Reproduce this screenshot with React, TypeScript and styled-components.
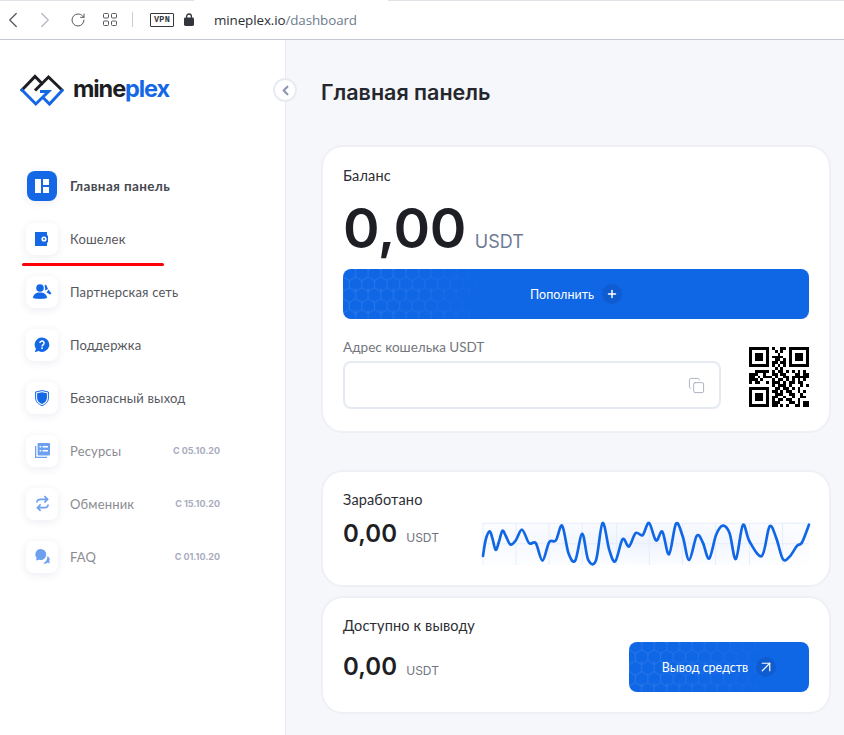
import React from "react";
import styled, { createGlobalStyle } from "styled-components";
import { Copy, Plus, ArrowUpRight, ChevronLeft, ChevronRight, RotateCw } from "lucide-react";

const Global = createGlobalStyle`
  html, body { margin: 0; padding: 0; height: 100%; overflow: hidden; background: #fff; }
  body { font-family: "Lato", "Noto Sans", sans-serif; }
  * { box-sizing: border-box; }
`;

const Page = styled.div`
  width: 844px;
  height: 735px;
  display: flex;
  flex-direction: column;
  overflow: hidden;
`;

const Bar = styled.header`
  height: 40px;
  flex: none;
  display: flex;
  align-items: center;
  padding: 0 0 0 4px;
  background: linear-gradient(#dfe2e7, #dfe2e7) 0 0 / 194px 1px no-repeat,
    linear-gradient(#dfe2e7, #dfe2e7) 388px 0 / 456px 1px no-repeat, #fff;
  border-bottom: 1px solid #c3c8d2;
`;

const NavArrow = styled.span<{ $dim?: boolean }>`
  display: flex;
  justify-content: center;
  width: 18px;
  margin-right: ${(p) => (p.$dim ? 16 : 14)}px;
  color: ${(p) => (p.$dim ? "#b5b9c0" : "#55595f")};
  & > svg {
    flex: none;
  }
`;

const BarIcon = styled.span<{ $gap: number }>`
  display: flex;
  color: #55595f;
  margin-right: ${(p) => p.$gap}px;
`;

const Separator = styled.span`
  width: 1px;
  height: 15px;
  background: #c9ccd2;
  margin-right: 17px;
`;

const VpnBadge = styled.span`
  width: 24px;
  height: 14px;
  border: 1px solid #33373d;
  border-radius: 1px;
  font: 700 8.5px/12px "Liberation Mono", monospace;
  letter-spacing: 0.2px;
  color: #33373d;
  text-align: center;
  margin-right: 10px;
`;

const Url = styled.span`
  font: 400 13.4px "Open Sans", sans-serif;
  letter-spacing: -0.1px;
  margin-left: 20px;
  color: #2c3036;
`;

const UrlPath = styled.span`
  color: #6d7c8c;
`;

const Body = styled.div`
  flex: 1;
  display: flex;
  min-height: 0;
`;

const Sidebar = styled.aside`
  position: relative;
  width: 286px;
  flex: none;
  background: #fff;
  border-right: 1px solid #e9ebf3;
  display: flex;
  flex-direction: column;
`;

const LogoRow = styled.div`
  height: 119px;
  padding: 33px 0 0 19px;
  display: flex;
  align-items: flex-start;
  gap: 8px;
`;

const LogoText = styled.span`
  font: 700 23.5px/32px "Inter", sans-serif;
  letter-spacing: -1.1px;
  color: #1d1e24;
`;

const LogoAccent = styled.span`
  color: #1468e6;
`;

const Toggle = styled.button`
  position: absolute;
  top: 38px;
  right: -12px;
  width: 24px;
  height: 24px;
  border-radius: 50%;
  border: 2px solid #e9ebf3;
  background: #fff;
  padding: 0;
  display: flex;
  align-items: center;
  justify-content: center;
  color: #8d95b3;
`;

const NavList = styled.nav`
  display: flex;
  flex-direction: column;
  padding: 0 0 0 26px;
`;

const NavItem = styled.div`
  position: relative;
  height: 53px;
  display: flex;
  align-items: center;
  padding-right: 65px;
`;

const IconTile = styled.span<{ $active?: boolean; $muted?: boolean }>`
  width: ${(p) => (p.$active ? 30 : 32)}px;
  height: ${(p) => (p.$active ? 30 : 32)}px;
  margin: 0 ${(p) => (p.$active ? 1 : 0)}px;
  flex: none;
  display: flex;
  align-items: center;
  justify-content: center;
  border-radius: 8px;
  background: ${(p) => (p.$active ? "#1468e6" : "#fff")};
  color: #1468e6;
  box-shadow: 0 2px 8px rgba(40, 60, 120, 0.09);
  & > svg {
    opacity: ${(p) => (p.$muted ? 0.62 : 1)};
  }
`;

const NavLabel = styled.span<{ $active?: boolean; $muted?: boolean }>`
  margin-left: 12px;
  flex: 1;
  font-size: ${(p) => (p.$active ? 13.5 : 13)}px;
  font-weight: ${(p) => (p.$active ? 700 : 400)};
  color: ${(p) => (p.$active ? "#46484f" : p.$muted ? "#8a8c92" : "#56585e")};
  letter-spacing: ${(p) => (p.$active ? 0.35 : 0.17)}px;
`;

const SoonDate = styled.span`
  font: 700 9px "Inter", sans-serif;
  color: #a8acbe;
`;

const RedMark = styled.span`
  position: absolute;
  left: -4px;
  top: 51px;
  width: 142px;
  height: 3px;
  border-radius: 2px;
  background: #ff0008;
`;

const Main = styled.main`
  flex: 1;
  background: #f6f7fb;
  padding: 0 13px 0 35px;
  display: flex;
  flex-direction: column;
`;

const Title = styled.h1`
  height: 105px;
  margin: 0;
  padding-bottom: 2px;
  display: flex;
  align-items: center;
  font: 600 21.5px "Inter", sans-serif;
  color: #25272d;
`;

const Card = styled.section<{ $h: number; $mt?: number }>`
  height: ${(p) => p.$h}px;
  margin-top: ${(p) => p.$mt ?? 0}px;
  background: #fff;
  border: 2px solid #eff0f6;
  border-radius: 22px;
  padding: 0 20px;
  display: flex;
  flex-direction: column;
`;

const CardLabel = styled.div<{ $pt: number }>`
  padding-top: ${(p) => p.$pt}px;
  font-size: 14.5px;
  line-height: 18px;
  letter-spacing: 0.15px;
  color: #2c2e34;
`;

const BigAmount = styled.div`
  display: flex;
  align-items: baseline;
  gap: 9px;
  height: 56px;
  margin-top: 15px;
  line-height: 56px;
`;

const BigNumber = styled.span`
  font: 600 55.5px/56px "Inter", sans-serif;
  letter-spacing: -0.4px;
  color: #1e1f25;
`;

const BigUnit = styled.span`
  font: 400 18px "Inter", sans-serif;
  color: #6f7b93;
`;

const PrimaryButton = styled.button<{ $w?: number }>`
  position: relative;
  overflow: hidden;
  width: ${(p) => (p.$w ? `${p.$w}px` : "100%")};
  height: 50px;
  flex: none;
  border: 0;
  border-radius: 8px;
  background: #1067e6;
  color: #fff;
  font-family: "Lato", "Noto Sans", sans-serif;
  font-size: 12.5px;
  display: flex;
  align-items: center;
  justify-content: center;
  gap: 8px;
  padding: 0;
`;

const TopUp = styled(PrimaryButton)`
  margin-top: 13px;
`;

const ButtonText = styled.span`
  position: relative;
`;

const ButtonBadge = styled.span`
  position: relative;
  width: 20px;
  height: 20px;
  border-radius: 50%;
  background: #0f5cd0;
  display: flex;
  align-items: center;
  justify-content: center;
`;

const Hex = styled.svg`
  position: absolute;
  left: 0;
  top: 0;
  width: 150px;
  height: 100%;
`;

const AddressRow = styled.div`
  display: flex;
  justify-content: space-between;
  align-items: flex-end;
  margin-top: 18px;
`;

const AddressField = styled.div`
  width: 378px;
`;

const AddressLabel = styled.div`
  font-size: 13.5px;
  line-height: 20px;
  color: #73767d;
`;

const AddressBox = styled.div`
  height: 48px;
  margin-top: 4px;
  border: 2px solid #e6eaf3;
  border-radius: 8px;
  display: flex;
  align-items: center;
  justify-content: flex-end;
  padding-right: 14px;
  color: #a6acbc;
`;

const QrCode = styled.svg`
  width: 60px;
  height: 60px;
  flex: none;
  margin-bottom: 2px;
  display: block;
`;

const StatRow = styled.div<{ $mt: number; $align: string }>`
  display: flex;
  justify-content: space-between;
  align-items: ${(p) => p.$align};
  margin-top: ${(p) => p.$mt}px;
`;

const Amount = styled.div`
  display: flex;
  align-items: baseline;
  gap: 9px;
`;

const SmallNumber = styled.span`
  font: 600 24px/30px "Inter", sans-serif;
  letter-spacing: 0.1px;
  color: #1e1f25;
`;

const SmallUnit = styled.span`
  font: 400 12px "Inter", sans-serif;
  color: #6f7480;
`;

const Chart = styled.svg`
  width: 326px;
  height: 42px;
  margin-top: 4px;
  display: block;
  overflow: visible;
`;

const qrRows = [
  "111111101001101111111",
  "100000100101001000001",
  "101110100010001011101",
  "101110101111001011101",
  "101110100110101011101",
  "100000101101101000001",
  "111111101010101111111",
  "000000000101000000000",
  "001111101011010101010",
  "111001001101100011011",
  "110101110100110111111",
  "111010001011010101010",
  "101100101110101101100",
  "000000001011101000101",
  "111111100110110101000",
  "100000101101011001010",
  "101110100111001100100",
  "101110101100100100110",
  "101110101011011001000",
  "100000101110001101011",
  "111111101101010011011",
];

const wave: [number, number][] = [
  [40, 138], [48, 90], [60, 65], [68, 85], [78, 120], [88, 95], [98, 63], [108, 78], [122, 104], [138, 92],
  [157, 60], [178, 100], [198, 100], [218, 152], [238, 97], [258, 92], [277, 48], [296, 130], [316, 152],
  [337, 72], [355, 150], [378, 152], [398, 40], [418, 120], [436, 154], [458, 88], [477, 110], [497, 70],
  [518, 76], [537, 40], [558, 92], [577, 66], [597, 133], [618, 42], [638, 80], [657, 150], [680, 78],
  [698, 98], [717, 146], [738, 75], [758, 48], [778, 70], [797, 147], [818, 46], [838, 95], [875, 138],
  [898, 50], [918, 85], [938, 148], [958, 140], [980, 108], [995, 98], [1016, 45],
];

function smooth(pts: [number, number][]) {
  let d = `M${pts[0][0]} ${pts[0][1]}`;
  for (let i = 0; i < pts.length - 1; i++) {
    const p0 = pts[Math.max(i - 1, 0)];
    const p1 = pts[i];
    const p2 = pts[i + 1];
    const p3 = pts[Math.min(i + 2, pts.length - 1)];
    const c1 = [p1[0] + (p2[0] - p0[0]) / 6, p1[1] + (p2[1] - p0[1]) / 6];
    const c2 = [p2[0] - (p3[0] - p1[0]) / 6, p2[1] - (p3[1] - p1[1]) / 6];
    d += `C${c1[0]} ${c1[1]} ${c2[0]} ${c2[1]} ${p2[0]} ${p2[1]}`;
  }
  return d;
}

const HexOverlay = ({ id }: { id: string }) => (
  <Hex aria-hidden="true">
    <defs>
      <pattern id={id} width="12.6" height="21.8" patternUnits="userSpaceOnUse" y="-3">
        <path
          d="M6.3 0L12.6 3.6V10.9L6.3 14.5L0 10.9V3.6ZM6.3 14.5V21.8M0 3.6V0M12.6 3.6V0"
          fill="none"
          stroke="#fff"
          strokeOpacity="0.15"
          strokeWidth="0.8"
        />
      </pattern>
      <linearGradient id={`${id}-f`}>
        <stop offset="0" stopColor="#fff" />
        <stop offset="0.5" stopColor="#fff" stopOpacity="0.6" />
        <stop offset="1" stopColor="#fff" stopOpacity="0" />
      </linearGradient>
      <mask id={`${id}-m`}>
        <rect width="150" height="50" fill={`url(#${id}-f)`} />
      </mask>
    </defs>
    <rect width="150" height="50" fill={`url(#${id})`} mask={`url(#${id}-m)`} />
  </Hex>
);

const Logo = () => (
  <svg width="46" height="34" viewBox="0 0 46 34" fill="none" strokeWidth="3" strokeLinejoin="miter">
    <path d="M2 18L16 3.5L23 10.5L29.5 4L44 18" stroke="#1d1e24" />
    <path d="M16 17.5L23.5 10" stroke="#1d1e24" />
    <path d="M2 16L16.8 31L29.5 18.5H21M24 24.5L30.5 31L44 16.5" stroke="#1468e6" />
  </svg>
);

const DashIcon = () => (
  <svg width="16" height="16" viewBox="0 0 16 16" fill="#fff">
    <rect x="1" y="1" width="6" height="14" />
    <rect x="9" y="1" width="6" height="6" />
    <rect x="9" y="9" width="6" height="6" />
  </svg>
);

const WalletIcon = () => (
  <svg width="14" height="14" viewBox="0 0 14 14">
    <path d="M0 0H12V3.5H13V10.5H12V14H0Z" fill="currentColor" />
    <circle cx="9" cy="7" r="2.6" fill="#fff" />
    <circle cx="9" cy="7" r="1" fill="currentColor" />
  </svg>
);

const UsersIcon = () => (
  <svg width="19" height="15" viewBox="0 0 19 15" fill="currentColor">
    <circle cx="7" cy="4" r="3.8" />
    <path d="M0 14C0 10.5 3 8.5 7 8.5S14 10.5 14 14C10 15.2 4 15.2 0 14Z" />
    <path d="M11.5 1.5L13 0.5L15 5L12 6.5C12.3 4.8 12.2 3 11.5 1.5ZM15.5 5.5L18.5 9.5L17 10.5L13.5 8.5Z" />
  </svg>
);

const HelpIcon = () => (
  <svg width="16" height="16" viewBox="0 0 16 16">
    <path d="M8 0.5A7.2 7.2 0 1 1 4.6 14L0.7 15.3L2 11.8A7.2 7.2 0 0 1 8 0.5Z" fill="currentColor" />
    <path d="M5.9 6.1A2.1 2.1 0 1 1 8.9 8C8.2 8.4 8 8.7 8 9.4" fill="none" stroke="#fff" strokeWidth="1.5" />
    <rect x="7.2" y="10.4" width="1.6" height="1.6" fill="#fff" />
  </svg>
);

const ShieldIcon = () => (
  <svg width="14" height="16" viewBox="0 0 14 16">
    <path d="M7 0.6L13.4 2V8C13.4 11.8 10.5 14.4 7 15.6C3.5 14.4 0.6 11.8 0.6 8V2Z" fill="none" stroke="currentColor" strokeWidth="1" />
    <path d="M7 2.2L11.9 3.3V8C11.9 10.9 9.7 13 7 14C4.3 13 2.1 10.9 2.1 8V3.3Z" fill="currentColor" />
  </svg>
);

const ListIcon = () => (
  <svg width="15" height="15" viewBox="0 0 15 15">
    <path d="M0 3H1.3V13.7H12V15H0Z" fill="currentColor" />
    <rect x="2.6" y="0" width="12.4" height="12.4" rx="0.8" fill="currentColor" />
    <path d="M4.6 3H6.2V4.6H4.6ZM7.6 3H13V4.6H7.6ZM4.6 7H6.2V8.6H4.6ZM7.6 7H13V8.6H7.6Z" fill="#fff" />
  </svg>
);

const SwapIcon = () => (
  <svg width="13" height="17" viewBox="0 0 14 18" fill="none" stroke="currentColor" strokeWidth="1.8">
    <path d="M1 8C1 5.5 3 4.5 5 4.5H12M9 1L12.5 4.5L9 8" />
    <path d="M13 10C13 12.5 11 13.5 9 13.5H2M5 10L1.5 13.5L5 17" />
  </svg>
);

const ChatIcon = () => (
  <svg width="15" height="15" viewBox="0 0 15 15" fill="currentColor">
    <path d="M14.8 14.6L12.8 13.6C11.5 14.8 9.6 14.9 8 14.2C10.6 13.2 12.2 11 12.3 8.2C12.3 7.9 12.3 7.6 12.2 7.3C14.2 8 15.4 10 14.2 12Z" />
    <path d="M5.7 0A5.5 5.5 0 0 1 5.7 11C5.2 11 4.7 10.9 4.2 10.8L1 11.6L1.6 9A5.5 5.5 0 0 1 5.7 0Z" />
  </svg>
);

const items = [
  { label: "Главная панель", icon: <DashIcon />, active: true },
  { label: "Кошелек", icon: <WalletIcon />, mark: true },
  { label: "Партнерская сеть", icon: <UsersIcon /> },
  { label: "Поддержка", icon: <HelpIcon /> },
  { label: "Безопасный выход", icon: <ShieldIcon /> },
  { label: "Ресурсы", icon: <ListIcon />, soon: "С 05.10.20" },
  { label: "Обменник", icon: <SwapIcon />, soon: "С 15.10.20" },
  { label: "FAQ", icon: <ChatIcon />, soon: "С 01.10.20" },
];

export default function App() {
  const gridX = [40, 139, 238, 337, 440, 538, 637, 736, 838, 937];
  return (
    <Page>
      <Global />
      <Bar>
        <NavArrow><ChevronLeft size={26} strokeWidth={1.2} /></NavArrow>
        <NavArrow $dim><ChevronRight size={26} strokeWidth={1.2} /></NavArrow>
        <BarIcon $gap={17}><RotateCw size={16} strokeWidth={1.5} /></BarIcon>
        <BarIcon $gap={15}>
          <svg width="14" height="13" viewBox="0 0 14 13" fill="none" stroke="currentColor">
            <rect x="0.5" y="0.5" width="5" height="4.5" rx="1" />
            <rect x="8.5" y="0.5" width="5" height="4.5" rx="1" />
            <rect x="0.5" y="8" width="5" height="4.5" rx="1" />
            <rect x="8.5" y="8" width="5" height="4.5" rx="1" />
          </svg>
        </BarIcon>
        <Separator />
        <VpnBadge>VPN</VpnBadge>
        <BarIcon $gap={0}>
          <svg width="10" height="13" viewBox="0 0 10 13" fill="#33373d">
            <path d="M2.6 5V3.4a2.4 2.4 0 0 1 4.8 0V5" fill="none" stroke="#33373d" strokeWidth="1.3" />
            <rect x="0" y="4.6" width="10" height="8.4" rx="1.4" />
          </svg>
        </BarIcon>
        <Url>mineplex.io<UrlPath>/dashboard</UrlPath></Url>
      </Bar>
      <Body>
        <Sidebar>
          <LogoRow>
            <Logo />
            <LogoText>mine<LogoAccent>plex</LogoAccent></LogoText>
          </LogoRow>
          <Toggle aria-label="collapse"><ChevronLeft size={15} strokeWidth={3.5} /></Toggle>
          <NavList>
            {items.map((it) => (
              <NavItem key={it.label}>
                <IconTile $active={it.active} $muted={!!it.soon}>{it.icon}</IconTile>
                <NavLabel $active={it.active} $muted={!!it.soon}>{it.label}</NavLabel>
                {it.soon && <SoonDate>{it.soon}</SoonDate>}
                {it.mark && <RedMark />}
              </NavItem>
            ))}
          </NavList>
        </Sidebar>
        <Main>
          <Title>Главная панель</Title>
          <Card $h={288}>
            <CardLabel $pt={20}>Баланс</CardLabel>
            <BigAmount>
              <BigNumber>0,00</BigNumber>
              <BigUnit>USDT</BigUnit>
            </BigAmount>
            <TopUp>
              <HexOverlay id="hex-a" />
              <ButtonText>Пополнить</ButtonText>
              <ButtonBadge><Plus size={12} strokeWidth={3} /></ButtonBadge>
            </TopUp>
            <AddressRow>
              <AddressField>
                <AddressLabel>Адрес кошелька USDT</AddressLabel>
                <AddressBox><Copy size={17} strokeWidth={1.3} /></AddressBox>
              </AddressField>
              <QrCode viewBox="0 0 21 21" shapeRendering="crispEdges">
                {qrRows.map((row, y) =>
                  row.split("").map((c, x) =>
                    c === "1" ? <rect key={`${x}-${y}`} x={x} y={y} width="1" height="1" fill="#000" /> : null
                  )
                )}
              </QrCode>
            </AddressRow>
          </Card>
          <Card $h={117} $mt={37}>
            <CardLabel $pt={19}>Заработано</CardLabel>
            <StatRow $mt={10} $align="flex-start">
              <Amount>
                <SmallNumber>0,00</SmallNumber>
                <SmallUnit>USDT</SmallUnit>
              </Amount>
              <Chart viewBox="40 40 976 125" preserveAspectRatio="none">
                <defs>
                  <radialGradient id="chart-bg" cx="0.5" cy="0.45" r="0.6">
                    <stop offset="0" stopColor="#eef3fd" />
                    <stop offset="1" stopColor="#fcfdff" />
                  </radialGradient>
                </defs>
                <rect x="40" y="40" width="976" height="125" fill="url(#chart-bg)" />
                <g stroke="#e6edfb" strokeWidth="3">
                  {gridX.map((x) => <line key={x} x1={x} x2={x} y1="40" y2="165" />)}
                  <line x1="40" x2="1016" y1="41" y2="41" />
                  <line x1="40" x2="1016" y1="102" y2="102" />
                </g>
                <path d={smooth(wave)} fill="none" stroke="#1067e6" strokeWidth="8" strokeLinecap="round" />
              </Chart>
            </StatRow>
          </Card>
          <Card $h={118} $mt={9}>
            <CardLabel $pt={19}>Доступно к выводу</CardLabel>
            <StatRow $mt={7} $align="center">
              <Amount>
                <SmallNumber>0,00</SmallNumber>
                <SmallUnit>USDT</SmallUnit>
              </Amount>
              <PrimaryButton $w={180}>
                <HexOverlay id="hex-b" />
                <ButtonText>Вывод средств</ButtonText>
                <ButtonBadge><ArrowUpRight size={18} strokeWidth={1.6} /></ButtonBadge>
              </PrimaryButton>
            </StatRow>
          </Card>
        </Main>
      </Body>
    </Page>
  );
}
